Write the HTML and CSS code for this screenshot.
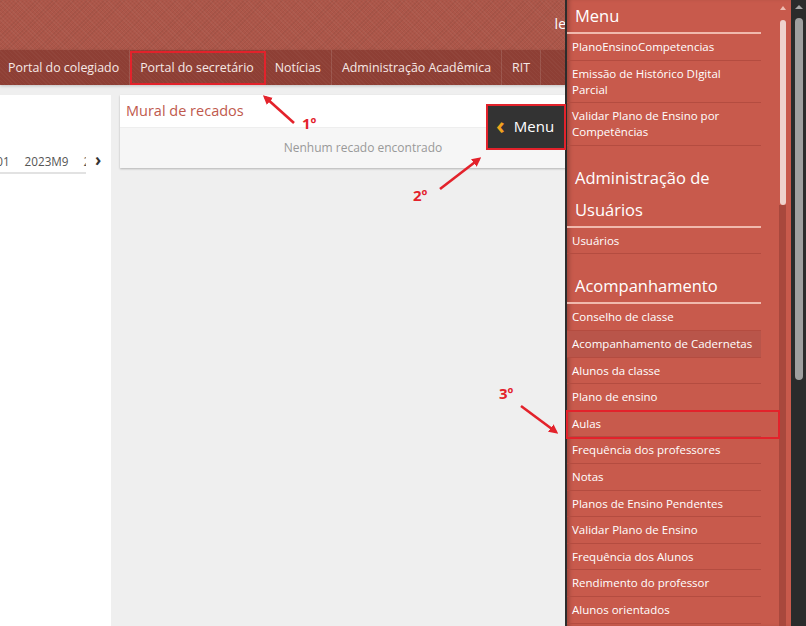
FILE: index.html
```html
<!DOCTYPE html>
<html lang="pt-BR">
<head>
<meta charset="utf-8">
<title>Portal</title>
<link rel="stylesheet" href="styles.css">
</head>
<body>
<div class="page">
  <header class="topbar"><span class="user">le</span></header>
  <nav class="navbar">
    <a class="nav-item nav-first">Portal do colegiado</a>
    <a class="nav-item">Portal do secretário</a>
    <a class="nav-item">Notícias</a>
    <a class="nav-item">Administração Acadêmica</a>
    <a class="nav-item">RIT</a>
  </nav>
  <main class="content">
    <section class="left-panel">
      <div class="tabs">
        <div class="tab-strip">
          <div class="tab-track">
            <span class="tab">2023M01</span>
            <span class="tab">2023M9</span>
            <span class="tab">2023M10</span>
          </div>
        </div>
        <span class="tab-next">&#8250;</span>
      </div>
    </section>
    <section class="center">
      <div class="card">
        <div class="card-head">Mural de recados</div>
        <div class="card-body">Nenhum recado encontrado</div>
      </div>
    </section>
  </main>

  <button class="menu-toggle"><span class="chev">&#8249;</span>Menu</button>

  <aside class="sidebar">
    <div class="menu">
      <h3 class="menu-title">Menu</h3>
      <a class="menu-item">PlanoEnsinoCompetencias</a>
      <a class="menu-item">Emissão de Histórico DIgital Parcial</a>
      <a class="menu-item">Validar Plano de Ensino por Competências</a>
      <h3 class="menu-title menu-group">Administração de Usuários</h3>
      <a class="menu-item">Usuários</a>
      <h3 class="menu-title menu-group">Acompanhamento</h3>
      <a class="menu-item">Conselho de classe</a>
      <a class="menu-item is-hover">Acompanhamento de Cadernetas</a>
      <a class="menu-item">Alunos da classe</a>
      <a class="menu-item">Plano de ensino</a>
      <a class="menu-item">Aulas</a>
      <a class="menu-item">Frequência dos professores</a>
      <a class="menu-item">Notas</a>
      <a class="menu-item">Planos de Ensino Pendentes</a>
      <a class="menu-item">Validar Plano de Ensino</a>
      <a class="menu-item">Frequência dos Alunos</a>
      <a class="menu-item">Rendimento do professor</a>
      <a class="menu-item">Alunos orientados</a>
    </div>
    <div class="menu-scroll">
      <span class="menu-scroll-up"></span>
      <span class="menu-scroll-thumb"></span>
      <span class="menu-scroll-track"></span>
    </div>
  </aside>

  <div class="page-scroll">
    <span class="page-scroll-up"></span>
    <span class="page-scroll-thumb"></span>
  </div>

  <div class="mark mark-portal"></div>
  <div class="mark mark-menu"></div>
  <div class="mark mark-aulas"></div>

  <svg class="annotations" width="806" height="626" viewBox="0 0 806 626">
    <defs>
      <marker id="ah" viewBox="0 0 10 10" refX="7" refY="5" markerWidth="3.6" markerHeight="3.6" orient="auto">
        <path d="M0,0 L10,5 L0,10 z" fill="#e3222b"/>
      </marker>
    </defs>
    <line x1="294" y1="123" x2="265" y2="97" stroke="#e3222b" stroke-width="2.6" marker-end="url(#ah)"/>
    <line x1="440" y1="189" x2="479" y2="159" stroke="#e3222b" stroke-width="2.6" marker-end="url(#ah)"/>
    <line x1="521" y1="406" x2="556" y2="432" stroke="#e3222b" stroke-width="2.6" marker-end="url(#ah)"/>
    <text class="anno-text" x="302" y="129">1º</text>
    <text class="anno-text" x="413" y="201">2º</text>
    <text class="anno-text" x="499" y="399">3º</text>
  </svg>
</div>
</body>
</html>
```
FILE: styles.css
```css
* { box-sizing: border-box; }
html, body { margin: 0; padding: 0; }
body {
  width: 806px;
  height: 626px;
  overflow: hidden;
  background: #efefef;
  font-family: "Open Sans", "Noto Sans", "Liberation Sans", sans-serif;
  color: #333;
}
.page { position: relative; width: 806px; height: 626px; }

.topbar {
  height: 50px;
  background-color: #ac5649;
  background-image: repeating-linear-gradient(45deg, rgba(255,255,255,0.04) 0 1px, transparent 1px 3px),
                    repeating-linear-gradient(-45deg, rgba(0,0,0,0.05) 0 1px, transparent 1px 3px);
  display: flex;
  justify-content: flex-end;
  align-items: center;
  padding: 0 240px 4px 0;
}
.user { color: #fff; font-size: 14px; }

.navbar {
  height: 35px;
  background-color: #8e3f35;
  background-image: repeating-linear-gradient(45deg, rgba(255,255,255,0.03) 0 1px, transparent 1px 3px);
  display: flex;
  align-items: stretch;
  box-shadow: 0 1px 3px rgba(0,0,0,0.2);
}
.nav-item {
  display: flex;
  align-items: center;
  padding: 0 10px;
  color: #f6e9e6;
  font-size: 12.4px;
  border-right: 1px solid rgba(255,255,255,0.12);
  white-space: nowrap;
}
.nav-first { padding-left: 8px; }

.content {
  display: grid;
  grid-template-columns: 111px 486px;
  column-gap: 9px;
  padding-top: 10px;
  height: 541px;
}
.left-panel { background: #fff; }
.tabs {
  margin-top: 58px;
  display: flex;
  align-items: flex-start;
}
.tab-strip {
  width: 86px;
  overflow: hidden;
  border-bottom: 2px solid #e2e2e2;
  padding-bottom: 3px;
}
.tab-track {
  display: flex;
  gap: 15px;
  margin-left: -41px;
  white-space: nowrap;
}
.tab { font-size: 11.7px; color: #555; line-height: 16px; }
.tab-next {
  margin-left: 9px;
  font-size: 17px;
  line-height: 14px;
  font-weight: bold;
  color: #333;
}

.card {
  background: #fff;
  box-shadow: 0 1px 2px rgba(0,0,0,0.25);
}
.card-head {
  height: 32px;
  padding: 6px 6px 0;
  font-size: 14.5px;
  color: #c0594d;
}
.card-body {
  height: 41px;
  background: #f6f6f6;
  border-top: 1px solid #eee;
  text-align: center;
  padding-top: 11px;
  font-size: 12px;
  color: #999;
}

.menu-toggle {
  position: absolute;
  left: 486px;
  top: 104px;
  width: 80px;
  height: 46px;
  background: #333;
  border: 0;
  padding: 0 0 2px 10px;
  display: flex;
  align-items: center;
  color: #fff;
  font-family: inherit;
  font-size: 15px;
}
.chev {
  color: #f0a31d;
  font-size: 24px;
  font-weight: bold;
  line-height: 20px;
  margin-right: 9px;
  margin-top: -3px;
}

.sidebar {
  position: absolute;
  top: 0;
  left: 565px;
  width: 226px;
  height: 626px;
  background: #c85a4c;
  border-left: 2px solid #2c2c2c;
  box-shadow: inset 4px 0 4px -2px rgba(0,0,0,0.25);
  display: flex;
  overflow: hidden;
}
.menu { width: 194px; flex: none; }
.menu-title {
  margin: 0;
  padding: 0 8px;
  font-weight: normal;
  font-size: 16.5px;
  line-height: 32px;
  color: #fff;
  border-bottom: 2px solid #f0b9ad;
}
.menu-group { padding-top: 16px; }
.menu-item {
  display: block;
  padding: 5px 5px 4.6px;
  font-size: 11.5px;
  line-height: 16px;
  color: #fff;
  border-bottom: 1px solid #b44c40;
}
.is-hover { background: #b9554a; }

.menu-scroll {
  margin-left: 18px;
  width: 7px;
  display: flex;
  flex-direction: column;
  align-items: center;
}
.menu-scroll-up {
  margin-top: 6px;
  width: 0; height: 0;
  border-left: 3px solid transparent;
  border-right: 3px solid transparent;
  border-bottom: 4px solid #eebcb2;
}
.menu-scroll-thumb {
  margin-top: 10px;
  width: 6px;
  height: 185px;
  border-radius: 3px;
  background: #eed3cd;
}
.menu-scroll-track {
  width: 7px;
  flex: 1;
  background: #a8483d;
}

.page-scroll {
  position: absolute;
  top: 0;
  left: 791px;
  width: 15px;
  height: 626px;
  background: #2b2b2b;
  display: flex;
  flex-direction: column;
  align-items: center;
}
.page-scroll-up {
  margin-top: 5px;
  width: 0; height: 0;
  border-left: 4px solid transparent;
  border-right: 4px solid transparent;
  border-bottom: 4px solid #a5a5a5;
}
.page-scroll-thumb {
  margin-top: 9px;
  width: 8px;
  height: 362px;
  border-radius: 4px;
  background: #9f9f9f;
}

.mark {
  position: absolute;
  border: 2px solid #e3222b;
  pointer-events: none;
}
.mark-portal { left: 130px; top: 51px; width: 136px; height: 34px; }
.mark-menu { left: 486px; top: 104px; width: 80px; height: 46px; }
.mark-aulas { left: 566px; top: 410px; width: 214px; height: 29px; }

.annotations { position: absolute; left: 0; top: 0; pointer-events: none; }
.anno-text {
  font-family: "Open Sans", "Liberation Sans", sans-serif;
  font-weight: bold;
  font-size: 15px;
  fill: #e3222b;
}
```
